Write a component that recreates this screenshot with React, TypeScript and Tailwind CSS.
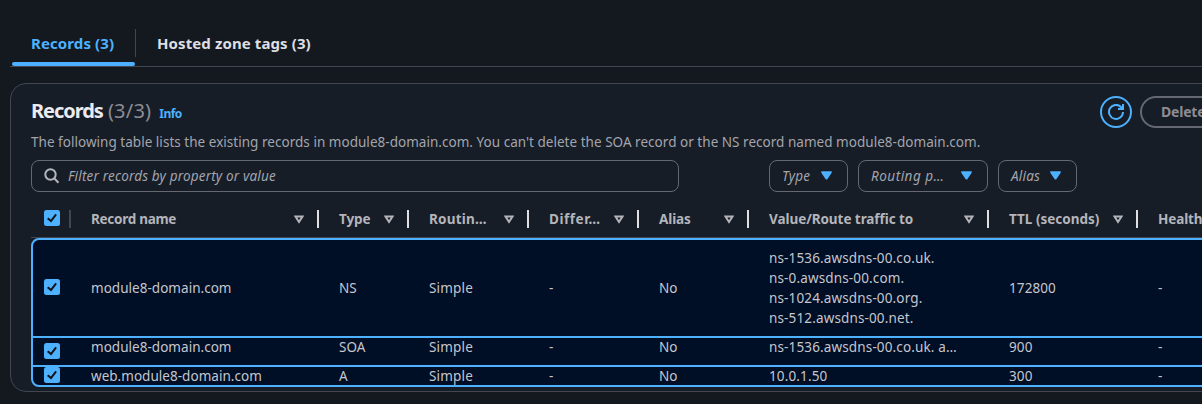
import React from "react";

const columns = [
  { label: "Record name", width: "w-[248px]", text: "tracking-[-0.28px]", cell: "" },
  { label: "Type", width: "w-[90px]", text: "tracking-[-0.1px]", cell: "" },
  { label: "Routin…", width: "w-[120px]", text: "tracking-[0.2px]", cell: "tracking-[0.2px]" },
  { label: "Differ…", width: "w-[110px]", text: "tracking-[0.55px]", cell: "" },
  { label: "Alias", width: "w-[110px]", text: "tracking-[-0.1px]", cell: "" },
  { label: "Value/Route traffic to", width: "w-[240px]", text: "tracking-[-0.06px]", cell: "tracking-[0.14px]" },
  { label: "TTL (seconds)", width: "w-[149px]", text: "tracking-[0px]", cell: "tracking-[0.1px]" },
  { label: "Health", width: "w-[200px]", text: "tracking-[-0.1px]", cell: "" },
];

const rows = [
  {
    height: "h-[98px]",
    pad: "pt-0",
    check: "pb-[2px]",
    cells: ["module8-domain.com", "NS", "Simple", "-", "No", "", "172800", "-"],
    values: ["ns-1536.awsdns-00.co.uk.", "ns-0.awsdns-00.com.", "ns-1024.awsdns-00.org.", "ns-512.awsdns-00.net."],
  },
  {
    height: "h-[29px]",
    pad: "pb-[9px]",
    check: "pb-px",
    cells: ["module8-domain.com", "SOA", "Simple", "-", "No", "", "900", "-"],
    values: ["ns-1536.awsdns-00.co.uk. a…"],
  },
  {
    height: "h-[18px]",
    pad: "pt-0",
    check: "pb-[2px]",
    cells: ["web.module8-domain.com", "A", "Simple", "-", "No", "", "300", "-"],
    values: ["10.0.1.50"],
  },
];

function Checkbox() {
  return (
    <svg className="block size-4 shrink-0" viewBox="0 0 16 16" fill="none">
      <rect width="16" height="16" rx="2.5" fill="#4db1ff" />
      <path d="M3.7 8.2 7 11 12.1 4.3" stroke="#0f141a" strokeWidth="2" />
    </svg>
  );
}

function SortIcon() {
  return (
    <svg className="block h-[9px] w-[10px] shrink-0" viewBox="0 0 10 9" fill="none">
      <path d="M1.5 1.5h7L5 7Z" stroke="#b4b4bb" strokeWidth="2" />
    </svg>
  );
}

function Filter({ label, size, text }: { label: string; size: string; text: string }) {
  return (
    <div className={`flex h-8 items-center justify-between rounded-lg border border-[#656871] pl-3 pr-[15px] italic text-[#a4a4ad] ${size} ${text}`}>
      <span className="whitespace-nowrap">{label}</span>
      <svg className="mb-px block h-[9px] w-[11px]" viewBox="0 0 11 9">
        <path d="M.3.3h10.4v1.4L6.3 8.2Q5.5 9 4.7 8.2L.3 1.7Z" fill="#4db1ff" />
      </svg>
    </div>
  );
}

export default function App() {
  return (
    <div className="h-[404px] w-[1202px] overflow-hidden bg-[#141920] pl-[10px] font-['Noto_Sans',sans-serif] text-[13.5px] leading-5 tracking-[0.03px] text-[#c6c6cd]">
      <nav className="flex h-[67px] border-b border-[#424650] pt-[29px] text-[15px] font-bold tracking-[0.1px]">
        <div className="flex w-[126px] flex-col">
          <div className="flex h-7 items-center border-r border-[#424650] pl-[21px] text-[#4db1ff]">Records (3)</div>
          <div className="ml-[2px] mt-[5px] h-1 w-[123px] rounded-xs bg-[#4db1ff]" />
        </div>
        <div className="flex h-7 items-center pl-[21px] text-[#dedee3]">Hosted zone tags (3)</div>
      </nav>

      <section className="mt-4 h-[309px] w-[1300px] rounded-2xl border border-[#424650] bg-[#161d26] pl-5">
        <header className="flex h-[47px] items-start">
          <div className="flex w-[1069px] items-baseline pt-[13px] leading-7">
            <h2 className="text-[20px] font-bold tracking-[-1.05px] text-[#ebebf0]">
              Records <span className="ml-px font-normal tracking-[0.2px] text-[#8c8c94]">(3/3)</span>
            </h2>
            <a className="ml-2 text-[12px] font-bold tracking-[-0.5px] text-[#4db1ff]">Info</a>
          </div>
          <button className="mt-3 flex size-8 items-center justify-center rounded-full border-2 border-[#4db1ff]">
            <svg className="block size-4" viewBox="0 0 16 16" fill="none" stroke="#4db1ff" strokeWidth="2">
              <path d="M15 8a7 7 0 1 1-2-5l2 2" />
              <path d="M15 0v5h-5" />
            </svg>
          </button>
          <button className="ml-2 mt-3 flex h-8 w-[150px] items-center whitespace-nowrap rounded-full border-2 border-[#656871] pl-[19px] text-[14px] font-bold tracking-[-0.2px] text-[#8c8c94]">
            Delete
          </button>
        </header>

        <p className="h-[29px] pt-px text-[#a4a4ad]">
          The following table lists the existing records in module8-domain.com. You can't delete the SOA record or the NS record named module8-domain.com.
        </p>

        <div className="flex">
          <div className="mr-[90px] flex h-8 w-[648px] items-center rounded-lg border border-[#656871] pl-3 italic tracking-[0.17px] text-[#a4a4ad]">
            <svg className="mr-2 block size-4" viewBox="0 0 16 16" fill="none" stroke="#b4b4bb" strokeWidth="2">
              <circle cx="6.5" cy="6.5" r="5.2" />
              <path d="m10.2 10.2 4.3 4.5" />
            </svg>
            Filter records by property or value
          </div>
          <div className="flex gap-[10px]">
            <Filter label="Type" size="w-[79px]" text="tracking-[0.2px]" />
            <Filter label="Routing p…" size="w-[130px]" text="tracking-[0.5px]" />
            <Filter label="Alias" size="w-[79px]" text="tracking-[0.2px]" />
          </div>
        </div>

        <div className="flex h-[46px] items-start border-b border-[#424650] pt-[18px] font-bold text-[#b4b4bb]">
          <div className="flex h-[18px] w-10 shrink-0 items-start border-r-2 border-[#424650] pl-[13px]">
            <Checkbox />
          </div>
          {columns.map((column) => (
            <div key={column.label} className={`flex h-[18px] shrink-0 items-center justify-between border-r-2 border-[#dedee3] pl-5 pr-[13px] ${column.width}`}>
              <span className={column.text}>{column.label}</span>
              <SortIcon />
            </div>
          ))}
        </div>

        <div className="w-[1260px] overflow-hidden rounded-lg border-2 border-[#4db1ff] bg-[#000e26]">
          {rows.map((row, index) => (
            <div key={index} className={`flex ${row.height} ${index < 2 ? "border-b-2 border-[#4db1ff]" : ""}`}>
              <div className={`flex w-[38px] shrink-0 items-center pl-[11px] ${row.check}`}>
                <Checkbox />
              </div>
              {columns.map((column, c) => (
                <div key={column.label} className={`flex shrink-0 flex-col justify-center whitespace-nowrap pl-5 ${column.width} ${column.cell} ${row.pad}`}>
                  {c === 5 ? row.values.map((value) => <div key={value}>{value}</div>) : row.cells[c]}
                </div>
              ))}
            </div>
          ))}
        </div>
      </section>
    </div>
  );
}
